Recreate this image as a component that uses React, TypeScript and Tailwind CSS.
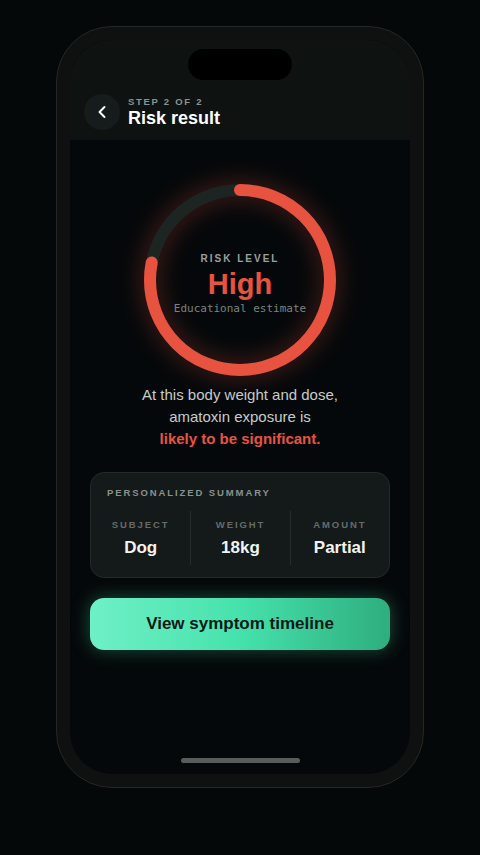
import { ChevronLeft } from "lucide-react";

const ARC_R = 90;
const ARC_LEN = 2 * Math.PI * ARC_R;
const RISK_PCT = 0.78;

const summary = [
  { label: "SUBJECT", value: "Dog" },
  { label: "WEIGHT", value: "18kg" },
  { label: "AMOUNT", value: "Partial" },
];

const RiskRing = () => {
  return (
    <div className="relative w-[200px] h-[200px]">
      <svg
        width="200"
        height="200"
        viewBox="0 0 200 200"
        className="absolute inset-0 drop-shadow-[0_0_12px_rgba(232,83,63,0.4)]"
      >
        <circle cx="100" cy="100" r={ARC_R} fill="none" stroke="#1d2523" strokeWidth="12" />
        <circle
          cx="100"
          cy="100"
          r={ARC_R}
          fill="none"
          stroke="#e8533f"
          strokeWidth="12"
          strokeLinecap="round"
          strokeDasharray={`${ARC_LEN * RISK_PCT} ${ARC_LEN}`}
          transform="rotate(-90 100 100)"
        />
      </svg>
      <div className="absolute inset-0 flex flex-col items-center justify-center pt-[8px]">
        <span className="text-[10px] font-bold tracking-[0.2em] text-[#9aa09d] leading-none">
          RISK LEVEL
        </span>
        <span className="text-[29px] font-bold text-[#e8533f] leading-none mt-[6px]">High</span>
        <span className="text-[11px] text-[#7c8380] leading-none mt-[4px] font-['DejaVu_Sans_Mono',monospace]">
          Educational estimate
        </span>
      </div>
    </div>
  );
};

export default function App() {
  return (
    <div className="min-h-[855px] w-full bg-[#050808] flex justify-center pt-[26px] font-['Liberation_Sans',Arial,sans-serif]">
      <div className="w-[368px] h-[762px] rounded-[56px] bg-[#0f1111] border border-[#242727] p-[13px]">
        <div className="w-full h-full rounded-[42px] overflow-hidden bg-[#05080a] flex flex-col items-center">
          {/* top bar */}
          <div className="w-full h-[100px] bg-[#0e1312] flex flex-col items-center pt-[9px]">
            <div className="w-[104px] h-[31px] rounded-full bg-black" />
            <div className="w-full flex items-center gap-[8px] px-[14px] mt-[14px]">
              <button className="w-[36px] h-[36px] rounded-full bg-[#151c1b] flex items-center justify-center text-white">
                <ChevronLeft size={20} strokeWidth={2.4} />
              </button>
              <div className="flex flex-col">
                <span className="text-[9.5px] font-bold tracking-[0.18em] text-[#8a9490] leading-none">
                  STEP 2 OF 2
                </span>
                <span className="text-[18px] font-bold text-white leading-none mt-[3px]">Risk result</span>
              </div>
            </div>
          </div>

          <div className="mt-[40px]">
            <RiskRing />
          </div>

          <p className="mt-[4px] text-center text-[15px] leading-[22px] text-[#c6ccc9]">
            At this body weight and dose,
            <br />
            amatoxin exposure is
            <br />
            <span className="font-bold text-[#e8533f]">likely to be significant.</span>
          </p>

          <div className="mt-[22px] w-[300px] h-[106px] rounded-[14px] bg-[#141a19] border border-[#232a28] pt-[15px]">
            <div className="px-4 text-[9.5px] font-bold tracking-[0.2em] text-[#8a918e] leading-none">
              PERSONALIZED SUMMARY
            </div>
            <div className="grid grid-cols-3 mt-[13px]">
              {summary.map((s, i) => (
                <div
                  key={s.label}
                  className={`flex flex-col items-center py-[9px] ${i > 0 ? "border-l border-[#252c2a]" : ""}`}
                >
                  <span className="text-[9.5px] font-bold tracking-[0.2em] text-[#646c69] leading-none">
                    {s.label}
                  </span>
                  <span className="text-[17px] font-bold text-[#f1f3f2] leading-none mt-[10px]">{s.value}</span>
                </div>
              ))}
            </div>
          </div>

          <button className="mt-[20px] w-[300px] h-[52px] rounded-[14px] bg-gradient-to-r from-[#6ef0c6] via-[#45e2ac] to-[#2fae7f] shadow-[0_0_18px_rgba(60,220,160,0.35)] text-[17px] font-bold text-[#0c1a15]">
            View symptom timeline
          </button>

          <div className="flex-1" />
          <div className="w-[119px] h-[5px] rounded-full bg-[#5a5c5c] mb-[11px]" />
        </div>
      </div>
    </div>
  );
}
